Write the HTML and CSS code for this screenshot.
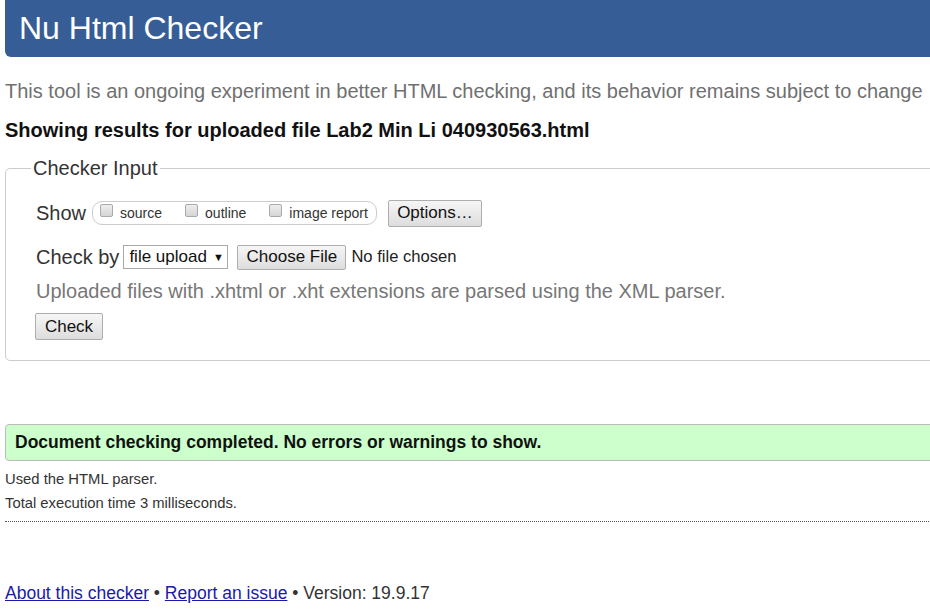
FILE: index.html
```html
<!DOCTYPE html>
<html lang="en">
<head>
<meta charset="utf-8">
<title>Nu Html Checker</title>
<link rel="stylesheet" href="styles.css">
</head>
<body>
<div class="page">
  <h1 class="title">Nu Html Checker</h1>
  <p class="intro">This tool is an ongoing experiment in better HTML checking, and its behavior remains subject to change</p>
  <h2 class="results-head">Showing results for uploaded file Lab2 Min Li 040930563.html</h2>
  <fieldset class="checker">
    <legend class="checker-legend">Checker Input</legend>
    <div class="row">
      <span class="row-label">Show</span>
      <span class="show-group">
        <label class="opt"><span class="cb"></span>source</label>
        <label class="opt"><span class="cb"></span>outline</label>
        <label class="opt"><span class="cb"></span>image report</label>
      </span>
      <span class="btn btn-options">Options…</span>
    </div>
    <div class="row">
      <span class="row-label">Check by</span>
      <span class="select">file upload <span class="caret">▼</span></span>
      <span class="btn btn-file">Choose File</span>
      <span class="nofile">No file chosen</span>
    </div>
    <p class="hint">Uploaded files with .xhtml or .xht extensions are parsed using the XML parser.</p>
    <span class="btn btn-check">Check</span>
  </fieldset>
  <div class="success">Document checking completed. No errors or warnings to show.</div>
  <p class="meta">Used the HTML parser.</p>
  <p class="meta meta-last">Total execution time 3 milliseconds.</p>
  <p class="footer"><a href="#">About this checker</a> • <a href="#">Report an issue</a> • Version: 19.9.17</p>
</div>
</body>
</html>
```

FILE: styles.css
```css
html { overflow: hidden; }
body {
  margin: 0;
  font-family: "Liberation Sans", Arial, sans-serif;
  color: #222;
  background: #fff;
}
.page {
  width: 960px;
  padding-left: 5px;
}
.title {
  margin: 0;
  height: 57px;
  line-height: 56px;
  padding-left: 14px;
  background: #365d96;
  color: #fff;
  font-size: 32px;
  font-weight: normal;
  border-bottom-left-radius: 6px;
}
.intro {
  margin: 22px 0 0;
  font-size: 20px;
  line-height: 24px;
  color: #707070;
}
.results-head {
  margin: 16px 0 0;
  font-size: 20px;
  line-height: 22px;
  color: #111;
}
.checker {
  margin: 16px 0 0;
  padding: 6px 30px 20px;
  border: 1px solid #ccc;
  border-radius: 5px;
}
.checker-legend {
  padding: 0 2px;
  margin-left: -5px;
  font-size: 20px;
  color: #333;
}
.row {
  display: flex;
  align-items: center;
  height: 28px;
  margin-top: 13px;
}
.row + .row { margin-top: 16px; }
.row-label {
  font-size: 20px;
  color: #333;
  margin-right: 6px;
}
.show-group {
  display: flex;
  align-items: center;
  height: 22px;
  padding: 0 8px 0 7px;
  border: 1px solid #ccc;
  border-radius: 10px;
  font-size: 14px;
  color: #333;
}
.opt {
  display: flex;
  align-items: center;
  margin-right: 23px;
}
.opt:last-child { margin-right: 0; }
.cb {
  width: 11px;
  height: 11px;
  border: 1px solid #aaa;
  border-radius: 2px;
  background: linear-gradient(#eee, #d5d5d5);
  margin-right: 7px;
  position: relative;
  top: -3px;
}
.btn {
  display: inline-flex;
  align-items: center;
  justify-content: center;
  box-sizing: border-box;
  border: 1px solid #adadad;
  border-radius: 2px;
  background: linear-gradient(#f6f6f6, #dddddd);
  color: #111;
  font-size: 17px;
}
.btn-options {
  margin-left: 11px;
  width: 94px;
  height: 27px;
  font-size: 17px;
}
.select {
  display: inline-flex;
  align-items: center;
  box-sizing: border-box;
  height: 24px;
  width: 105px;
  padding-left: 5px;
  border: 1px solid #a9a9a9;
  font-size: 17px;
  color: #111;
  margin-left: -2px;
}
.caret { font-size: 11px; margin-left: 6px; }
.btn-file {
  margin-left: 9px;
  width: 109px;
  height: 25px;
}
.nofile {
  margin-left: 5px;
  font-size: 16.6px;
  color: #222;
}
.hint {
  margin: 8px 0 0;
  font-size: 20px;
  line-height: 24px;
  color: #777;
}
.btn-check {
  margin-top: 10px;
  width: 68px;
  height: 27px;
  margin-left: -1px;
}
.success {
  margin-top: 63px;
  box-sizing: border-box;
  height: 37px;
  line-height: 35px;
  padding-left: 9px;
  background: #ccffcc;
  border: 1px solid #bbb;
  border-radius: 4px;
  font-size: 17.5px;
  font-weight: bold;
  color: #111;
}
.meta {
  margin: 6px 0 0;
  font-size: 14.8px;
  line-height: 24px;
  color: #333;
}
.meta-last {
  margin-top: 0;
  padding-bottom: 6px;
  border-bottom: 1px dotted #555;
}
.footer {
  margin: 61px 0 0;
  font-size: 17.5px;
  color: #333;
}
.footer a { color: #1a1aa6; }
```
